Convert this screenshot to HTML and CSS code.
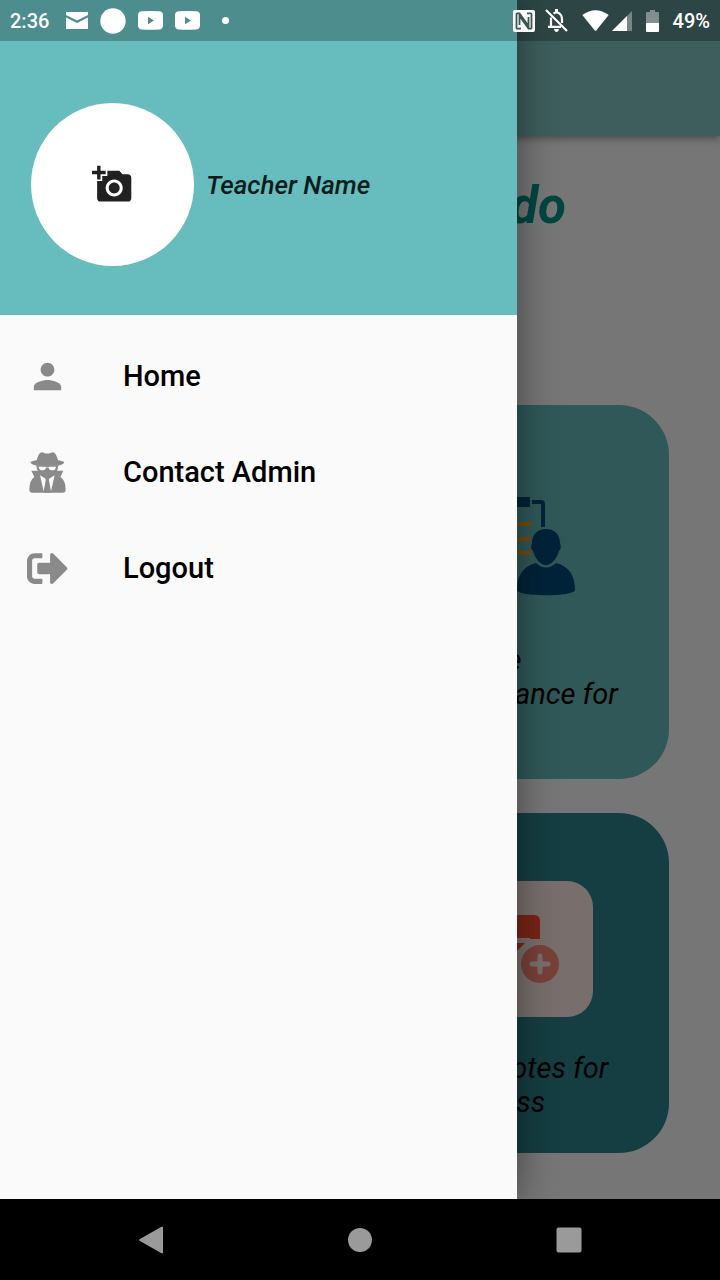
FILE: index.html
```html
<!DOCTYPE html>
<html lang="en">
<head>
<meta charset="utf-8">
<meta name="viewport" content="width=device-width, initial-scale=1">
<title>Teacher</title>
<link rel="stylesheet" href="styles.css">
</head>
<body>
<div class="app">
  <header class="status">
    <div class="status-left">
      <span class="clock">2:36</span>
      <svg width="22" height="17" viewBox="0 0 22 17"><path fill="#fff" d="M0 0h22v3L11 8.500 0 3z"/><path fill="#fff" d="M0 5.500 11 11l11-5.500V17H0z"/></svg>
      <svg width="26" height="26" viewBox="0 0 26 26"><circle cx="13" cy="13" r="12.700" fill="#fff"/></svg>
      <svg width="25" height="19" viewBox="0 0 25 19"><path fill="#fff" fill-rule="evenodd" d="M4 .3Q12.500-.3 21 .3q4 .2 4 4v10q0 4-4 4.300-8.500.5-17 0-4-.3-4-4.300v-10q0-3.800 4-4zM10 5.800v7.400l6-3.700z"/></svg>
      <svg width="25" height="19" viewBox="0 0 25 19"><path fill="#fff" fill-rule="evenodd" d="M4 .3Q12.500-.3 21 .3q4 .2 4 4v10q0 4-4 4.300-8.500.5-17 0-4-.3-4-4.300v-10q0-3.800 4-4zM10 5.800v7.400l6-3.700z"/></svg>
      <span class="dot"></span>
    </div>
    <div class="status-right">
      <svg class="nfc" width="22" height="22" viewBox="0 0 22 22"><rect width="22" height="22" rx="2" fill="#fff"/><path fill="none" stroke="#3a5653" stroke-width="1.800" d="M8 18.700H4.500q-1 0-1-1V4.300q0-1 1-1h2L15.500 16V7M14 3.300h3.500q1 0 1 1v13.400q0 1-1 1h-2L6.500 6v9"/></svg>
      <svg class="bell" width="23" height="23" viewBox="0 0 23 23"><g fill="none" stroke="#fff" stroke-width="2.200"><path d="M6 8.500V17M3 17.800h13M8.500 4.500Q11.500 2.500 14.500 4.500 17 6.500 17 10v4"/><path d="M1 1l21 21"/></g><path fill="#fff" d="M10 0h3v4h-3zM9 20h5q-.5 3-2.500 3T9 20z"/></svg>
      <svg class="wifi" width="27" height="21" viewBox="0 0 27 21"><path fill="#fff" d="M.3 5Q13.500-4.500 26.700 5L14.200 20.400q-.7.800-1.400 0z"/></svg>
      <svg class="signal" width="20" height="20" viewBox="0 0 20 20"><path fill="#fff" d="M0 20 20 0v20z" opacity=".35"/><path fill="#fff" d="M0 20 15 5v15z"/></svg>
      <svg class="battery" width="13" height="22" viewBox="0 0 13 22"><path fill="#fff" opacity=".4" d="M1 2h3V0h5v2h3q1 0 1 1v10H0V3q0-1 1-1z"/><path fill="#fff" d="M0 13h13v8q0 1-1 1H1q-1 0-1-1z"/></svg>
      <span>49%</span>
    </div>
  </header>

  <main class="screen">
    <section class="page">
      <div class="appbar"></div>
      <h1 class="title">To do</h1>
      <div class="cards">
        <article class="card card-light">
          <svg class="tile" viewBox="0 0 136 136">
            <path fill="#004c7a" d="M48 24h25v10H48z"/>
            <path fill="none" stroke="#004c7a" stroke-width="4" d="M75 29h9q2 0 2 2v23"/>
            <path stroke="#fa9a20" stroke-width="4" d="M46 51h28M46 66h28M46 80h28"/>
            <path fill="#004c7a" d="M89 56c9 0 14 6 14 14q2 5-1 8c-2 7-7 14-13 14s-11-7-13-14q-3-3-1-8c0-8 5-14 14-14z"/>
            <path fill="#004c7a" d="M79 90q10 9 20 0c12 3 19 11 19 27 0 7-58 7-58 0 0-16 7-24 19-27z"/>
          </svg>
          <p class="card-text">Update<br>Attendance for<br>class</p>
        </article>
        <article class="card card-dark">
          <svg class="tile tile-pink" viewBox="0 0 136 136">
            <path fill="#ff5032" d="M40 34h37q6 0 6 6v18H40z"/>
            <path fill="#ff5032" d="M40 62h28l-8 8H40z"/>
            <path stroke="#feebe6" stroke-width="4" d="M40 59h33"/>
            <circle cx="83" cy="83" r="22" fill="#feebe6"/>
            <circle cx="83" cy="83" r="19" fill="#ff8a78"/>
            <path stroke="#feebe6" stroke-width="5" stroke-linecap="round" d="M75 83h16M83 75v16"/>
          </svg>
          <p class="card-text">Put Notes for<br>its class</p>
        </article>
      </div>
    </section>
    <div class="scrim"></div>

    <aside class="drawer">
      <div class="profile">
        <button class="avatar" type="button" aria-label="Add photo">
          <svg width="41" height="41" viewBox="0 0 24 24"><path fill="#212121" d="M3 4V1h2v3h3v2H5v3H3V6H0V4h3zm3 6V7h3V4h7l1.830 2H21c1.100 0 2 .9 2 2v12c0 1.100-.9 2-2 2H5c-1.100 0-2-.9-2-2V10h3zm7 9c2.760 0 5-2.240 5-5s-2.240-5-5-5-5 2.240-5 5 2.240 5 5 5zm-3.200-5c0 1.770 1.430 3.200 3.200 3.200s3.200-1.430 3.200-3.200-1.430-3.200-3.200-3.200-3.200 1.430-3.200 3.200z"/></svg>
        </button>
        <span class="name">Teacher Name</span>
      </div>
      <nav>
        <ul class="menu">
          <li><a href="#home">
            <svg width="41" height="41" viewBox="0 0 24 24"><path d="M12 12c2.210 0 4-1.790 4-4s-1.790-4-4-4-4 1.790-4 4 1.790 4 4 4zm0 2c-2.670 0-8 1.340-8 4v2h16v-2c0-2.660-5.330-4-8-4z"/></svg>
            Home</a></li>
          <li><a href="#contact">
            <svg width="41" height="41" viewBox="0 0 123 123"><path d="M10 30Q20 25 29 25 33 8 40 2q5-3 10 0 11 5 22 0 5-3 10 0 7 6 11 23 9 0 19 5-2 8-19 11H29Q12 38 10 30z"/><path fill-rule="evenodd" d="M28 40h66l-2 12q-5 14-13 18H43Q35 66 30 52zM35 44q1 11 11 11 9 0 11-8h8q2 8 11 8 10 0 11-11H68l-5 2h-4l-5-2z"/><path d="M13 56h22q12 9 26 9t26-9h22l-9 19q16 10 16 38 0 9-9 9H16q-9 0-9-9 0-28 15-38z"/><path fill="#fafafa" d="m39 70 18 11-7 37zM83 70 65 81l7 37z"/><path d="m55 77 6-5 6 5-2 8 5 37H52l5-37z"/></svg>
            Contact Admin</a></li>
          <li><a href="#logout">
            <svg width="41" height="41" viewBox="0 0 512 512"><path d="M497 273L329 441c-15 15-41 4.500-41-17v-96H152c-13.300 0-24-10.700-24-24v-96c0-13.300 10.700-24 24-24h136V88c0-21.400 25.900-32 41-17l168 168c9.300 9.400 9.300 24.600 0 34zM192 436v-40c0-6.600-5.400-12-12-12H96c-17.700 0-32-14.300-32-32V160c0-17.700 14.300-32 32-32h84c6.600 0 12-5.400 12-12V76c0-6.600-5.400-12-12-12H96c-53 0-96 43-96 96v192c0 53 43 96 96 96h84c6.600 0 12-5.400 12-12z"/></svg>
            Logout</a></li>
        </ul>
      </nav>
    </aside>
  </main>

  <footer class="navbar">
    <button type="button" aria-label="Back"><svg width="28" height="28" viewBox="0 0 28 28"><path fill="#9a9a9a" stroke="#9a9a9a" stroke-width="2" stroke-linejoin="round" d="M3 14 25 1.500v25z"/></svg></button>
    <button type="button" aria-label="Home"><svg width="28" height="28" viewBox="0 0 28 28"><circle cx="14" cy="14" r="12" fill="#9a9a9a"/></svg></button>
    <button type="button" aria-label="Recent apps"><svg width="28" height="28" viewBox="0 0 28 28"><rect x="1.500" y="1.500" width="25" height="25" rx="2" fill="#9a9a9a"/></svg></button>
  </footer>
</div>
</body>
</html>
```
FILE: styles.css
```css
* {
  box-sizing: border-box;
}

body {
  margin: 0;
  font-family: Roboto, "Liberation Sans", sans-serif;
  background: #000;
}

svg {
  display: block;
  flex: none;
}

button {
  border: 0;
  padding: 0;
  background: none;
  cursor: pointer;
}

.app {
  position: relative;
  display: flex;
  flex-direction: column;
  min-height: 100vh;
}

/* Translucent system bar laid over the app */
.status {
  position: absolute;
  inset: 0 0 auto;
  z-index: 3;
  display: flex;
  justify-content: space-between;
  align-items: center;
  height: 41px;
  padding: 0 10px;
  background: rgba(0, 0, 0, 0.25);
  color: #fff;
  font-size: 20px;
  font-weight: 500;
}

.status-left,
.status-right {
  display: flex;
  align-items: center;
}

.status-left {
  gap: 12px;
}

.clock {
  margin-right: 5px;
}

.dot {
  width: 7px;
  height: 7px;
  margin-left: 10px;
  border-radius: 50%;
  background: #fff;
}

.nfc {
  margin-right: 10px;
}

.bell {
  margin-right: 14px;
}

.wifi {
  margin-right: 3px;
}

.signal {
  margin-right: 14px;
}

.battery {
  margin-right: 14px;
}

.screen {
  position: relative;
  flex: 1;
  display: flex;
  overflow: hidden;
  background: #fafafa;
}

.page {
  flex: 1;
  padding-bottom: 46px;
}

.appbar {
  height: 136px;
  background: #82c8c4;
  box-shadow: 0 2px 8px rgba(0, 0, 0, 0.4);
}

.title {
  margin: 40px 0 169px;
  padding-right: 154px;
  color: #009688;
  font-size: 51px;
  font-style: italic;
  font-weight: 700;
  line-height: 60px;
  text-align: right;
}

.cards {
  display: grid;
  grid-template-columns: 1fr 1fr;
  gap: 34px 42px;
  padding: 0 51px;
}

.card {
  grid-column: 2;
  display: flex;
  flex-direction: column;
  align-items: center;
  gap: 34px;
  padding: 68px 0 34px;
  border-radius: 50px;
}

.card-light {
  background: #66bbbb;
}

.card-dark {
  background: #2e858d;
}

.tile {
  width: 136px;
  height: 136px;
  border-radius: 26px;
}

.tile-pink {
  background: #feebe6;
}

.card-text {
  margin: 0;
  font-size: 29px;
  font-style: italic;
  line-height: 34px;
  white-space: nowrap;
}

.scrim {
  position: absolute;
  inset: 0;
  background: rgba(0, 0, 0, 0.53);
}

/* Drawer slides over the page */
.drawer {
  position: absolute;
  inset: 0 auto 0 0;
  width: 517px;
  max-width: 85%;
  background: #fafafa;
  box-shadow: 0 0 36px rgba(0, 0, 0, 0.45);
}

.profile {
  display: flex;
  align-items: center;
  gap: 12px;
  padding: 103px 31px 49px;
  background: #67bcbd;
}

.avatar {
  display: flex;
  align-items: center;
  justify-content: center;
  width: 163px;
  height: 163px;
  border-radius: 50%;
  background: #fff;
}

.name {
  color: #0c1c1c;
  font-size: 26px;
  font-style: italic;
  font-weight: 500;
}

.menu {
  margin: 0;
  padding: 13px 0;
  list-style: none;
}

.menu a {
  display: flex;
  align-items: center;
  gap: 55px;
  min-height: 96px;
  padding: 0 27px;
  color: #000;
  font-size: 29px;
  font-weight: 500;
  text-decoration: none;
}

.menu svg {
  fill: #8a8a8a;
}

.navbar {
  display: grid;
  grid-template-columns: repeat(3, 1fr);
  height: 81px;
  padding: 0 47px;
  background: #000;
}

.navbar button {
  display: flex;
  align-items: center;
  justify-content: center;
}
```
